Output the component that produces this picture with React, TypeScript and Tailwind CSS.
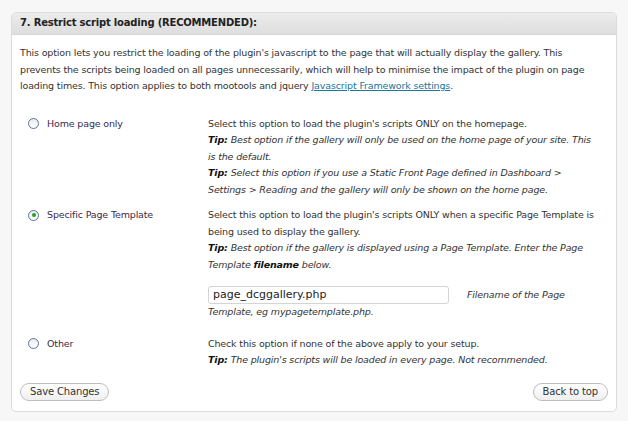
import type { ReactNode } from "react";

const font = { fontFamily: '"DejaVu Sans", Verdana, sans-serif' };

function Radio({ checked }: { checked?: boolean }) {
  return (
    <span className="inline-flex h-[11px] w-[11px] shrink-0 items-center justify-center rounded-full border border-[#5f7390] bg-gradient-to-b from-[#e9edf2] to-white">
      {checked && <span className="h-[4px] w-[4px] rounded-full bg-[#21a321]" />}
    </span>
  );
}

function Tip({ children }: { children: ReactNode }) {
  return (
    <div className="italic">
      <b className="font-bold text-[#111]">Tip:</b> {children}
    </div>
  );
}

function OptionRow({
  label,
  checked,
  className,
  children,
}: {
  label: string;
  checked?: boolean;
  className?: string;
  children: ReactNode;
}) {
  return (
    <div className={`flex ${className ?? ""}`}>
      <div className="flex h-[16.5px] w-[188px] shrink-0 items-center gap-[8px] self-start pl-[8px]">
        <Radio checked={checked} />
        <span className="text-[#3b2a4a]">{label}</span>
      </div>
      <div className="w-[392px]">{children}</div>
    </div>
  );
}

export default function App() {
  return (
    <div
      className="h-[421px] w-[628px] bg-[#f7f7f7] pl-[11px] pt-[12px] text-[9.5px] leading-[16.5px] tracking-[-0.15px] text-[#333]"
      style={font}
    >
      <div className="h-[400px] w-[606px] overflow-hidden rounded-[5px] border border-[#dcdcdc] bg-white">
        <div className="flex h-[22px] items-center border-b border-[#d6d6d6] bg-gradient-to-b from-[#ececec] to-[#dedede] pl-[8px] text-[10px] font-bold tracking-[-0.2px] text-[#222]">
          7. Restrict script loading (RECOMMENDED):
        </div>

        <div className="px-[8px]">
          <p className="mt-[10px] w-[585px]">
            This option lets you restrict the loading of the plugin's javascript to the page that will
            actually display the gallery. This prevents the scripts being loaded on all pages
            unnecessarily, which will help to minimise the impact of the plugin on page loading times.
            This option applies to both mootools and jquery{" "}
            <a className="text-[#21759b] underline">Javascript Framework settings</a>.
          </p>

          <OptionRow label="Home page only" className="mt-[21px]">
            <div>Select this option to load the plugin's scripts ONLY on the homepage.</div>
            <Tip>
              Best option if the gallery will only be used on the home page of your site. This is the
              default.
            </Tip>
            <Tip>
              Select this option if you use a Static Front Page defined in Dashboard &gt; Settings &gt;
              Reading and the gallery will only be shown on the home page.
            </Tip>
          </OptionRow>

          <OptionRow label="Specific Page Template" checked className="mt-[9px]">
            <div>
              Select this option to load the plugin's scripts ONLY when a specific Page Template is
              being used to display the gallery.
            </div>
            <Tip>
              Best option if the gallery is displayed using a Page Template. Enter the Page Template{" "}
              <b className="font-bold text-[#111]">filename</b> below.
            </Tip>
            <div className="mt-[13px] italic">
              <span className="mr-[18px] inline-flex h-[18px] w-[241px] items-center rounded-[3px] border border-[#d4d4d4] bg-white pl-[4px] align-middle text-[11px] not-italic tracking-normal text-[#222]">
                page_dcggallery.php
              </span>
              Filename of the Page Template, eg mypagetemplate.php.
            </div>
          </OptionRow>

          <OptionRow label="Other" className="mt-[15px]">
            <div>Check this option if none of the above apply to your setup.</div>
            <Tip>The plugin's scripts will be loaded in every page. Not recommended.</Tip>
          </OptionRow>

          <div className="mt-[14px] flex items-center justify-between">
            <button className="h-[18px] rounded-full border border-[#bdbdbd] bg-gradient-to-b from-white to-[#efefef] px-[9px] text-[10px] leading-none text-[#333]">
              Save Changes
            </button>
            <button className="h-[18px] rounded-full border border-[#bdbdbd] bg-gradient-to-b from-white to-[#efefef] px-[9px] text-[10px] leading-none text-[#333]">
              Back to top
            </button>
          </div>
        </div>
      </div>
    </div>
  );
}
